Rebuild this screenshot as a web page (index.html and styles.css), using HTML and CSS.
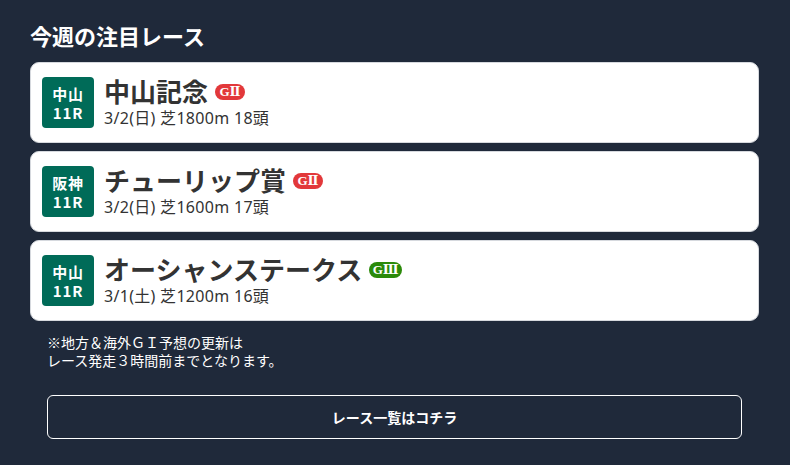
FILE: index.html
```html
<!DOCTYPE html>
<html lang="ja">
<head>
<meta charset="utf-8">
<link rel="stylesheet" href="styles.css">
</head>
<body>
<div class="wrap">
  <h2 class="heading">今週の注目レース</h2>
  <ul class="races">
    <li class="card">
      <div class="venue"><span>中山</span><span>11R</span></div>
      <div class="info">
        <div class="name-row"><span class="name">中山記念</span><span class="grade g2">GⅡ</span></div>
        <div class="meta">3/2(日) 芝1800m 18頭</div>
      </div>
    </li>
    <li class="card">
      <div class="venue"><span>阪神</span><span>11R</span></div>
      <div class="info">
        <div class="name-row"><span class="name">チューリップ賞</span><span class="grade g2">GⅡ</span></div>
        <div class="meta">3/2(日) 芝1600m 17頭</div>
      </div>
    </li>
    <li class="card">
      <div class="venue"><span>中山</span><span>11R</span></div>
      <div class="info">
        <div class="name-row"><span class="name">オーシャンステークス</span><span class="grade g3">GⅢ</span></div>
        <div class="meta">3/1(土) 芝1200m 16頭</div>
      </div>
    </li>
  </ul>
  <p class="note">※地方＆海外ＧＩ予想の更新は<br>レース発走３時間前までとなります。</p>
  <a class="more" href="#">レース一覧はコチラ</a>
</div>
</body>
</html>
```
FILE: styles.css
```css
html, body {
  margin: 0;
  padding: 0;
  background: #1f293a;
  font-family: "Noto Sans CJK JP", "Noto Sans", sans-serif;
  color: #fff;
}
.wrap {
  padding: 20px 31px 0 30px;
}
.heading {
  margin: 0 0 12px;
  font-size: 22px;
  line-height: 30px;
  font-weight: 700;
  color: #fff;
}
.races {
  list-style: none;
  margin: 0;
  padding: 0;
  display: flex;
  flex-direction: column;
  gap: 8px;
}
.card {
  display: flex;
  align-items: center;
  gap: 10px;
  background: #fff;
  border: 1px solid #d6d9de;
  border-radius: 9px;
  padding: 14px 11px;
  height: 51px;
}
.venue {
  width: 52px;
  height: 51px;
  flex: none;
  background: #006b58;
  border-radius: 4px;
  display: flex;
  flex-direction: column;
  align-items: center;
  justify-content: center;
  color: #fff;
  font-weight: 700;
  font-size: 15px;
  line-height: 19px;
  letter-spacing: 0.8px;
}
.info {
  color: #333;
  display: flex;
  flex-direction: column;
  gap: 3px;
}
.name-row {
  display: flex;
  align-items: center;
  gap: 7px;
  height: 30px;
  margin-top: -3px;
}
.name {
  font-size: 26px;
  font-weight: 700;
  line-height: 30px;
  color: #333;
}
.grade {
  display: inline-flex;
  align-items: center;
  justify-content: center;
  height: 16px;
  width: 30px;
  border-radius: 8px;
  color: #fff;
  font-family: "Liberation Serif", "DejaVu Serif", serif;
  font-weight: 700;
  font-size: 13px;
  margin-top: 2px;
}
.g2 { background: #e2383a; }
.g3 { background: #2b8a0a; width: 33px; }
.meta {
  font-family: "Noto Sans", "Noto Sans CJK JP", sans-serif;
  font-size: 16px;
  letter-spacing: 0.3px;
  line-height: 18px;
  color: #333;
}
.note {
  margin: 12px 0 0 17px;
  font-size: 14px;
  line-height: 18px;
  color: #fff;
}
.more {
  display: flex;
  align-items: center;
  justify-content: center;
  margin: 26px 17px 0 17px;
  height: 42px;
  border: 1px solid #fff;
  border-radius: 6px;
  color: #fff;
  font-weight: 700;
  font-size: 14px;
  text-decoration: none;
}
```
